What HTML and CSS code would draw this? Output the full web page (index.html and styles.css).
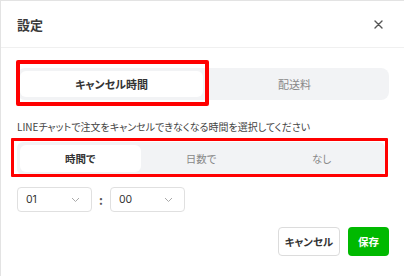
FILE: index.html
```html
<!DOCTYPE html>
<html lang="ja">
<head>
    <meta charset="UTF-8">
    <meta name="viewport" content="width=device-width, initial-scale=1.0">
    <title>設定</title>
    <link rel="stylesheet" href="styles.css">
</head>
<body>
    <div class="dialog">
        <header class="dialog-header">
            <h1>設定</h1>
            <button class="close-btn" aria-label="閉じる">
                <svg width="9" height="9" viewBox="0 0 9 9">
                    <path d="M1 1L8 8M8 1L1 8" stroke="#555" stroke-width="1.4" stroke-linecap="round"/>
                </svg>
            </button>
        </header>

        <main class="dialog-body">
            <div class="tabs">
                <div class="tab active">
                    キャンセル時間
                    <span class="mark mark-tab"></span>
                </div>
                <div class="tab">配送料</div>
            </div>

            <p class="label">LINEチャットで注文をキャンセルできなくなる時間を選択してください</p>

            <div class="segments">
                <div class="segment active">時間で</div>
                <div class="segment">日数で</div>
                <div class="segment">なし</div>
                <span class="mark mark-segments"></span>
            </div>

            <div class="time-row">
                <div class="select">
                    <span>01</span>
                    <svg width="9" height="6" viewBox="0 0 9 6"><path d="M1 1L4.5 4.5L8 1" fill="none" stroke="#aaa" stroke-width="1"/></svg>
                </div>
                <span class="colon">:</span>
                <div class="select">
                    <span>00</span>
                    <svg width="9" height="6" viewBox="0 0 9 6"><path d="M1 1L4.5 4.5L8 1" fill="none" stroke="#aaa" stroke-width="1"/></svg>
                </div>
            </div>

            <div class="actions">
                <button class="btn btn-cancel">キャンセル</button>
                <button class="btn btn-save">保存</button>
            </div>
        </main>
    </div>
</body>
</html>
```

FILE: styles.css
```css
body {
    margin: 0;
    padding: 0;
    background: #fff;
    font-family: "Noto Sans CJK JP", "Noto Sans", sans-serif;
    font-feature-settings: "palt";
    color: #333;
}

.dialog {
    width: 403px;
    height: 275px;
    border-top: 1px solid #e3e3e3;
    border-left: 1px solid #e3e3e3;
    background: #fff;
}

.dialog-header {
    display: flex;
    align-items: center;
    justify-content: space-between;
    height: 46px;
    padding: 0 21px 0 16px;
    border-bottom: 1px solid #f0f0f0;
}

.dialog-header h1 {
    margin: 0;
    font-size: 13px;
    font-weight: 700;
    color: #3a3a3a;
}

.close-btn {
    display: flex;
    padding: 0;
    border: none;
    background: none;
}

.dialog-body {
    padding: 20px 15px 0 16px;
}

.tabs {
    display: grid;
    grid-template-columns: 1fr 1fr;
    padding: 3px;
    background: #f2f3f5;
    border-radius: 8px;
}

.tab {
    position: relative;
    height: 26px;
    line-height: 26px;
    text-align: center;
    font-size: 11px;
    color: #888;
}

.tab.active {
    background: #fff;
    border-radius: 6px;
    color: #333;
    font-weight: 700;
}

.mark {
    position: absolute;
    border: 4px solid #f00;
    border-radius: 2px;
    pointer-events: none;
}

.mark-tab {
    top: -11px;
    bottom: -9px;
    left: -4px;
    right: -6px;
}

.label {
    margin: 20px 0 8px;
    font-size: 10px;
    line-height: 14px;
    color: #444;
}

.segments {
    position: relative;
    display: grid;
    grid-template-columns: 1fr 1fr 1fr;
    padding: 3px;
    margin-right: 4px;
    background: #f2f3f5;
    border-radius: 6px;
}

.segment {
    height: 27px;
    line-height: 27px;
    text-align: center;
    font-size: 10.5px;
    color: #888;
}

.segment.active {
    background: #fff;
    border-radius: 6px;
    color: #333;
    font-weight: 700;
}

.mark-segments {
    top: -4px;
    bottom: -2px;
    left: -6px;
    right: -3px;
    border-width: 3px;
    border-radius: 1px;
}

.time-row {
    display: flex;
    align-items: center;
    gap: 7px;
    margin-top: 12px;
}

.select {
    display: flex;
    align-items: center;
    justify-content: space-between;
    box-sizing: border-box;
    width: 75px;
    height: 25px;
    padding: 0 11px 0 8px;
    border: 1px solid #e0e0e0;
    border-radius: 4px;
    font-family: "Inter", "Noto Sans", sans-serif;
    font-size: 10.5px;
    color: #333;
}

.colon {
    font-size: 12px;
    font-weight: 700;
    color: #555;
}

.actions {
    display: flex;
    justify-content: flex-end;
    gap: 8px;
    margin-top: 15px;
}

.btn {
    height: 29px;
    padding: 0;
    border-radius: 4px;
    font-family: inherit;
    font-feature-settings: "palt";
    font-size: 10.5px;
    font-weight: 700;
    white-space: nowrap;
    cursor: pointer;
}

.btn-cancel {
    width: 62px;
    background: #fff;
    border: 1px solid #dcdcdc;
    color: #333;
}

.btn-save {
    width: 41px;
    background: #00b900;
    border: none;
    color: #fff;
}
```
